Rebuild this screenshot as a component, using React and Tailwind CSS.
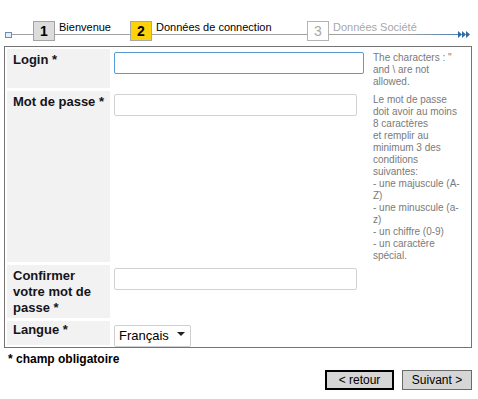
import React from 'react';

// Étape de l'assistant (numéro + libellé)
const Step = ({ num, label, state, width }) => {
    const box =
        state === 'done'
            ? 'bg-[#dcdcdc] border-[#a3a3a3] text-black font-bold'
            : state === 'current'
            ? 'bg-[#fdd20a] border-[#a8a8a8] text-black font-bold'
            : 'bg-white border-[#b4b4b4] text-[#a8a8a8]';
    return (
        <div className={`flex items-start shrink-0 ${width}`}>
            <div className={`relative z-10 w-[22px] h-[20px] border flex items-center justify-center text-[14px] leading-none ${box}`}>
                {num}
            </div>
            <span className={`ml-[4px] text-[11px] leading-[13px] ${state === 'todo' ? 'text-[#a8a8a8]' : 'text-black'}`}>
                {label}
            </span>
        </div>
    );
};

const Label = ({ children }) => (
    <div className="bg-[#f2f2f2] pl-[6px] pr-[4px] pt-[3px] text-[13px] leading-[16px] font-bold text-[#141420]">
        {children}
    </div>
);

const Help = ({ children }) => (
    <div className="pt-[3px] text-[10px] leading-[12px] text-[#7a7a7a]">
        <div className="w-[90px]">{children}</div>
    </div>
);

export default function App() {
    return (
        <div className="w-[478px] h-[399px] bg-white font-['Liberation_Sans',Arial,sans-serif] text-black">
            {/* Barre des étapes */}
            <div className="relative h-[46px] pt-[21px]">
                <div className="absolute left-[11px] top-[34px] w-[448px] h-px bg-[linear-gradient(to_right,#a2a2a2_88%,#4d7fb3)]" />
                <div className="relative flex items-start">
                    <div className="ml-[5px] mt-[11px] w-[7px] h-[6px] border border-[#6b8db3] bg-[#e6edf5] shrink-0" />
                    <div className="w-[21px] shrink-0" />
                    <Step num="1" label="Bienvenue" state="done" width="w-[97px]" />
                    <Step num="2" label="Données de connection" state="current" width="w-[177px]" />
                    <Step num="3" label="Données Société" state="todo" width="w-[151px]" />
                    <svg width="13" height="7" viewBox="0 0 13 7" className="mt-[10px] shrink-0">
                        <polygon points="0,0 4,3.5 0,7" fill="#2f6aa3" />
                        <polygon points="4,0 8,3.5 4,7" fill="#2f6aa3" />
                        <polygon points="8,0 12,3.5 8,7" fill="#2f6aa3" />
                    </svg>
                </div>
            </div>

            {/* Formulaire */}
            <div className="ml-[4px] w-[468px] border border-[#747474] p-[2px]">
                <div className="grid grid-cols-[103px_257px_96px] gap-[3px]">
                    <Label>Login *</Label>
                    <div className="pt-[3px] pl-px">
                        <input type="text" className="block w-[250px] h-[22px] border border-[#5b9bd3] rounded-[2px] outline-none" />
                    </div>
                    <Help>
                        The characters : " and \ are not allowed.
                    </Help>

                    <Label>Mot de passe *</Label>
                    <div className="pt-[3px] pl-px">
                        <input type="password" className="block w-[243px] h-[22px] border border-[#d2d2d2] rounded-[2px] outline-none" />
                    </div>
                    <Help>
                        Le mot de passe doit avoir au moins 8 caractères
                        <br />
                        et remplir au minimum 3 des conditions suivantes:
                        <br />- une majuscule (A-Z)
                        <br />- une minuscule (a-z)
                        <br />- un chiffre (0-9)
                        <br />- un caractère spécial.
                    </Help>

                    <div className="bg-[#f2f2f2] pl-[6px] pr-[4px] pt-[3px] pb-[2px] text-[13px] leading-[16px] font-bold text-[#141420]">
                        Confirmer votre mot de passe *
                    </div>
                    <div className="pt-[3px] pl-px">
                        <input type="password" className="block w-[243px] h-[22px] border border-[#d2d2d2] rounded-[2px] outline-none" />
                    </div>
                    <div />

                    <div className="bg-[#f2f2f2] pl-[6px] pt-[1px] pb-[2px] text-[13px] leading-[16px] font-bold text-[#141420]">
                        Langue *
                    </div>
                    <div className="pt-[2px] pl-px">
                        <div className="relative w-[77px] h-[22px]">
                            <select className="appearance-none w-full h-full border border-[#cfcfcf] rounded-[2px] bg-white pl-[4px] text-[13px] outline-none">
                                <option>Français</option>
                            </select>
                            <svg width="8" height="4" viewBox="0 0 8 4" className="absolute right-[6px] top-[9px] pointer-events-none">
                                <polygon points="0,0 8,0 4,4" fill="#222" />
                            </svg>
                        </div>
                    </div>
                    <div />
                </div>
            </div>

            <p className="ml-[8px] mt-[4px] text-[12px] leading-[14px] font-bold">* champ obligatoire</p>

            <div className="flex justify-end gap-[8px] w-[472px] mt-[4px]">
                <button className="w-[69px] h-[20px] bg-[#d6d6d6] border-2 border-black text-[12px] leading-none">
                    &lt; retour
                </button>
                <button className="w-[70px] h-[20px] bg-[#d6d6d6] border border-[#6a6a6a] text-[12px] leading-none">
                    Suivant &gt;
                </button>
            </div>
        </div>
    );
}
